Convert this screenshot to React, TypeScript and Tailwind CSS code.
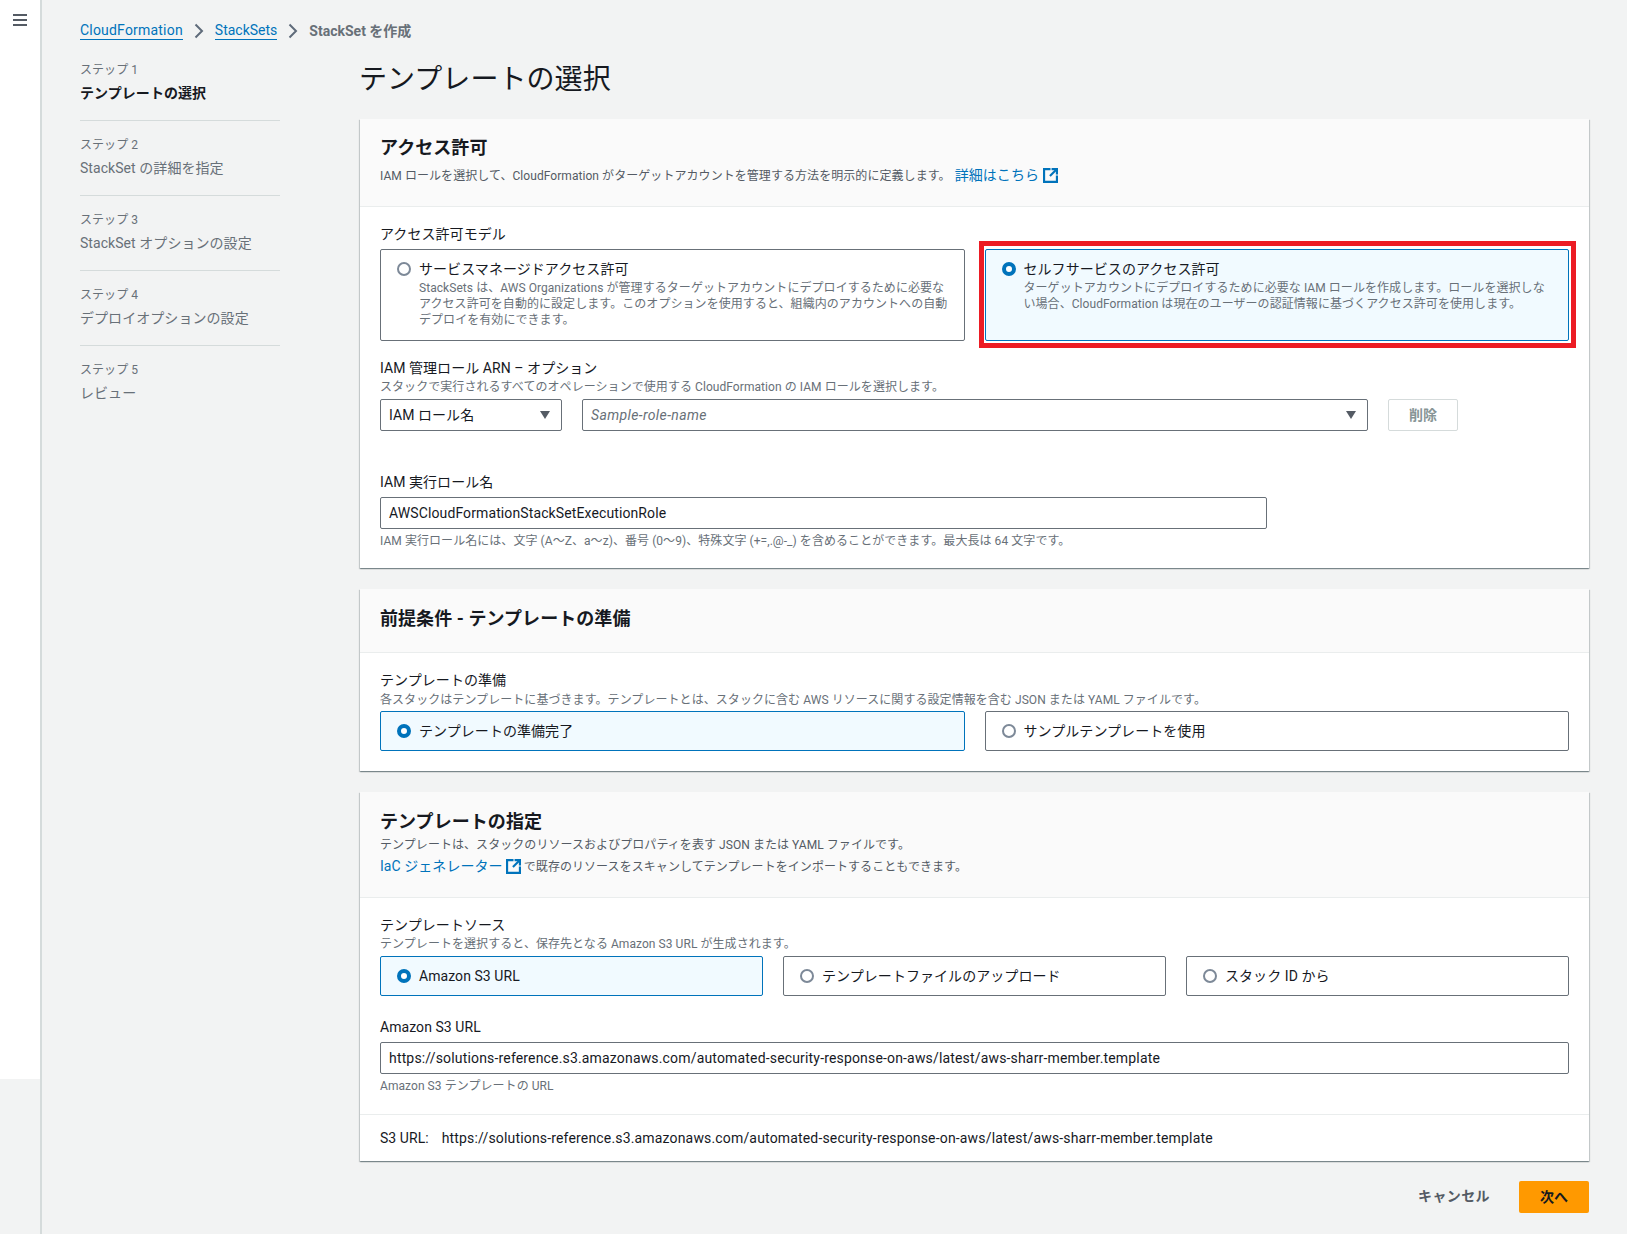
import React from "react"

const FONT = "font-['Roboto','Noto_Sans_CJK_JP',sans-serif]"

function ExternalIcon({ className }: { className?: string }) {
  return (
    <svg viewBox="0 0 14 14" className={"inline-block size-[15px] align-[-3px] " + (className ?? "")} fill="none" stroke="#0073bb" strokeWidth="2">
      <path d="M7 1H1v12h12V7" />
      <path d="M8 1h5v5" />
      <path d="M13 1L6.5 7.5" />
    </svg>
  )
}

function Chevron() {
  return (
    <svg viewBox="0 0 16 16" className="mx-[8px] size-4" fill="none" stroke="#5f6b7a" strokeWidth="2">
      <path d="M4.5 1.5L11 8l-6.5 6.5" />
    </svg>
  )
}

function Radio({ checked }: { checked?: boolean }) {
  if (checked) {
    return <span className="mt-[3px] size-[14px] shrink-0 rounded-full border-[4px] border-[#0073bb] bg-white" />
  }
  return <span className="mt-[3px] size-[14px] shrink-0 rounded-full border-2 border-[#7d8998] bg-white" />
}

type RadioCardProps = {
  title: string,
  description?: string,
  checked?: boolean,
  className?: string,
}

function RadioCard({ title, description, checked, className }: RadioCardProps) {
  return (
    <div className={(checked ? "border-[#0073bb] bg-[#f1faff] " : "border-[#687078] bg-white ") + "flex items-start gap-[8px] rounded-[2px] border px-[16px] pt-[9px] " + (className ?? "")}>
      <Radio checked={checked} />
      <div>
        <div className="text-[14px] leading-[20px] text-[#16191f]">{title}</div>
        {description && <div className="mt-[1px] text-[12px] leading-[16px] text-[#687078]">{description}</div>}
      </div>
    </div>
  )
}

function Select({ text, italic, className }: { text: string, italic?: boolean, className?: string }) {
  return (
    <div className={"flex h-[32px] items-center justify-between rounded-[2px] border border-[#687078] bg-white pl-[8px] pr-[10px] " + (className ?? "")}>
      <span className={italic ? "text-[14px] italic tracking-[0.38px] text-[#687078]" : "text-[14px] text-[#16191f]"}>{text}</span>
      <svg viewBox="0 0 12 10" className="h-[10px] w-[12px]" fill="#545b64"><path d="M1 1h10L6 9z" /></svg>
    </div>
  )
}

function Label({ children }: { children: React.ReactNode }) {
  return <div className="text-[14px] leading-[20px] text-[#16191f]">{children}</div>
}

function Hint({ children, className }: { children: React.ReactNode, className?: string }) {
  return <div className={"text-[12px] leading-[16px] text-[#687078] " + (className ?? "")}>{children}</div>
}

function TextInput({ value, className }: { value: string, className?: string }) {
  return (
    <div className={"flex h-[32px] items-center rounded-[2px] border border-[#687078] bg-white px-[8px] text-[14px] text-[#16191f] " + (className ?? "")}>
      {value}
    </div>
  )
}

function Panel({ header, children }: { header: React.ReactNode, children: React.ReactNode }) {
  return (
    <section className="bg-white shadow-[0_1px_1px_0_rgba(0,28,36,0.3),1px_1px_1px_0_rgba(0,28,36,0.15),-1px_1px_1px_0_rgba(0,28,36,0.15)]">
      <div className="border-b border-[#eaeded] bg-[#fafafa] px-[20px]">{header}</div>
      {children}
    </section>
  )
}

const steps = [
  { label: "ステップ 1", title: "テンプレートの選択", active: true },
  { label: "ステップ 2", title: "StackSet の詳細を指定" },
  { label: "ステップ 3", title: "StackSet オプションの設定" },
  { label: "ステップ 4", title: "デプロイオプションの設定" },
  { label: "ステップ 5", title: "レビュー" },
]

function Steps() {
  return (
    <ul className="-mt-[3px] w-[200px]">
      {steps.map((step, index) => (
        <li key={index} className={index === 0 ? "h-[62px] border-b border-[#d5dbdb] pt-[1px]" : index < steps.length - 1 ? "h-[75px] border-b border-[#d5dbdb] pt-[14px]" : "h-[75px] pt-[14px]"}>
          <div className="text-[12px] leading-[20px] text-[#687078]">{step.label}</div>
          <div className={step.active ? "mt-[3px] text-[14px] font-bold leading-[20px] text-[#16191f]" : "mt-[3px] text-[14px] leading-[20px] text-[#687078]"}>{step.title}</div>
        </li>
      ))}
    </ul>
  )
}

const URL = "https://solutions-reference.s3.amazonaws.com/automated-security-response-on-aws/latest/aws-sharr-member.template"

export default function App() {
  return (
    <div className={FONT + " relative flex h-[1234px] w-[1627px] overflow-hidden bg-[#f2f3f3] tracking-[0.06px]"}>
      <div className="w-[42px] shrink-0 border-r-2 border-[#d5dbdb]">
        <div className="flex h-[1079px] flex-col items-center bg-white pt-[14px]">
          <div className="flex w-[14px] flex-col gap-[3px]">
            <div className="h-[2px] bg-[#545b64]" />
            <div className="h-[2px] bg-[#545b64]" />
            <div className="h-[2px] bg-[#545b64]" />
          </div>
        </div>
      </div>

      <main className="w-[1548px] pl-[38px]">
        <nav className="flex h-[62px] items-center text-[14px] leading-[20px] tracking-[0px]">
          <a className="border-b border-[#0073bb] leading-[17px] tracking-[0.2px] text-[#0073bb]">CloudFormation</a>
          <Chevron />
          <a className="border-b border-[#0073bb] leading-[17px] text-[#0073bb]">StackSets</a>
          <Chevron />
          <span className="font-bold text-[#687078]">StackSet を作成</span>
        </nav>

        <div className="flex">
          <div className="w-[280px] shrink-0">
            <Steps />
          </div>

          <div className="w-[1229px]">
            <h1 className="-ml-[1px] h-[57px] pt-[2px] text-[28px] leading-[32px] text-[#16191f]">テンプレートの選択</h1>

            <div className="flex flex-col gap-[21px]">
              <Panel header={
                <div className="h-[87px] pt-[17px]">
                  <h2 className="text-[18px] font-bold leading-[24px] text-[#16191f]">アクセス許可</h2>
                  <p className="mt-[5px] text-[12px] leading-[20px] text-[#545b64]">
                    IAM ロールを選択して、CloudFormation がターゲットアカウントを管理する方法を明示的に定義します。
                    <a className="ml-[4px] text-[14px] text-[#0073bb]">詳細はこちら</a> <ExternalIcon className="ml-[1px]" />
                  </p>
                </div>
              }>
                <div className="px-[20px] pb-[19px] pt-[17px]">
                  <Label>アクセス許可モデル</Label>
                  <div className="mt-[5px] grid grid-cols-2 gap-[20px]">
                    <RadioCard className="h-[92px]" title="サービスマネージドアクセス許可" description="StackSets は、AWS Organizations が管理するターゲットアカウントにデプロイするために必要なアクセス許可を自動的に設定します。このオプションを使用すると、組織内のアカウントへの自動デプロイを有効にできます。" />
                    <RadioCard className="h-[92px]" checked title="セルフサービスのアクセス許可" description="ターゲットアカウントにデプロイするために必要な IAM ロールを作成します。ロールを選択しない場合、CloudFormation は現在のユーザーの認証情報に基づくアクセス許可を使用します。" />
                  </div>

                  <div className="mt-[17px]">
                    <Label>IAM 管理ロール ARN – オプション</Label>
                    <Hint className="mt-[1px]">スタックで実行されるすべてのオペレーションで使用する CloudFormation の IAM ロールを選択します。</Hint>
                    <div className="mt-[4px] flex items-center">
                      <Select text="IAM ロール名" className="w-[182px]" />
                      <Select text="Sample-role-name" italic className="ml-[20px] w-[786px]" />
                      <button className="ml-[20px] h-[32px] w-[70px] rounded-[2px] border border-[#d5dbdb] bg-white text-[14px] font-bold text-[#879596]">削除</button>
                    </div>
                  </div>

                  <div className="mt-[41px]">
                    <Label>IAM 実行ロール名</Label>
                    <TextInput className="mt-[5px] w-[887px] tracking-[0.11px]" value="AWSCloudFormationStackSetExecutionRole" />
                    <Hint className="mt-[4px]">IAM 実行ロール名には、文字 (A～Z、a～z)、番号 (0～9)、特殊文字 (+=,.@-_) を含めることができます。最大長は 64 文字です。</Hint>
                  </div>
                </div>
              </Panel>

              <Panel header={
                <div className="flex h-[63px] items-center pb-[4px]">
                  <h2 className="text-[18px] font-bold leading-[24px] text-[#16191f]">前提条件 - テンプレートの準備</h2>
                </div>
              }>
                <div className="px-[20px] pb-[20px] pt-[17px]">
                  <Label>テンプレートの準備</Label>
                  <Hint className="mt-[2px]">各スタックはテンプレートに基づきます。テンプレートとは、スタックに含む AWS リソースに関する設定情報を含む JSON または YAML ファイルです。</Hint>
                  <div className="mt-[3px] grid grid-cols-2 gap-[20px]">
                    <RadioCard className="h-[40px]" checked title="テンプレートの準備完了" />
                    <RadioCard className="h-[40px]" title="サンプルテンプレートを使用" />
                  </div>
                </div>
              </Panel>

              <Panel header={
                <div className="h-[105px] pt-[18px]">
                  <h2 className="text-[18px] font-bold leading-[24px] text-[#16191f]">テンプレートの指定</h2>
                  <p className="mt-[1px] text-[12px] leading-[20px] text-[#545b64]">テンプレートは、スタックのリソースおよびプロパティを表す JSON または YAML ファイルです。</p>
                  <p className="mt-[1px] text-[12px] leading-[20px] text-[#545b64]">
                    <a className="text-[14px] text-[#0073bb]">IaC ジェネレーター</a> <ExternalIcon /> で既存のリソースをスキャンしてテンプレートをインポートすることもできます。
                  </p>
                </div>
              }>
                <div className="px-[20px] pb-[20px] pt-[17px]">
                  <Label>テンプレートソース</Label>
                  <Hint className="mt-[1px]">テンプレートを選択すると、保存先となる Amazon S3 URL が生成されます。</Hint>
                  <div className="mt-[4px] grid grid-cols-3 gap-[20px]">
                    <RadioCard className="h-[40px]" checked title="Amazon S3 URL" />
                    <RadioCard className="h-[40px]" title="テンプレートファイルのアップロード" />
                    <RadioCard className="h-[40px]" title="スタック ID から" />
                  </div>
                  <div className="mt-[21px]">
                    <Label>Amazon S3 URL</Label>
                    <TextInput className="mt-[5px] tracking-[0.167px]" value={URL} />
                    <Hint className="mt-[4px]">Amazon S3 テンプレートの URL</Hint>
                  </div>
                </div>
                <div className="flex h-[47px] items-center border-t border-[#eaeded] px-[20px] text-[14px] text-[#16191f]">
                  <span className="mr-[13px]">S3 URL:</span>
                  <span className="tracking-[0.167px]">{URL}</span>
                </div>
              </Panel>
            </div>

            <div className="mt-[20px] flex items-center justify-end">
              <button className="-mt-[2px] mr-[29px] text-[14px] font-bold tracking-[0.4px] text-[#545b64]">キャンセル</button>
              <button className="h-[32px] w-[70px] rounded-[2px] bg-[#ff9900] text-[14px] font-bold text-[#16191f]">次へ</button>
            </div>
          </div>
        </div>
      </main>

      {/* red highlight drawn on top of the screenshot */}
      <div className="pointer-events-none absolute left-[979px] top-[241px] h-[107px] w-[597px] border-[5px] border-[#ec1c24]" />
    </div>
  )
}
